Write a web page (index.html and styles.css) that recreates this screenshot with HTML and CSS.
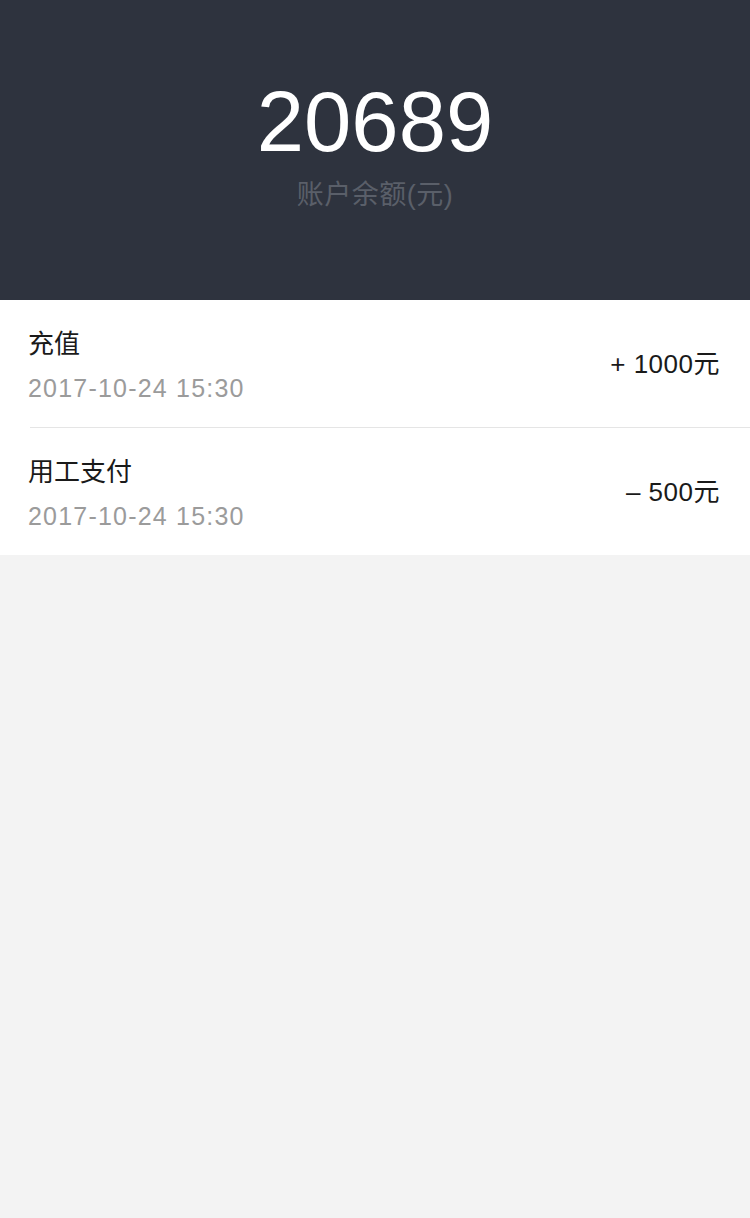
FILE: index.html
```html
<!DOCTYPE html>
<html lang="zh-CN">
<head>
    <meta charset="UTF-8">
    <meta name="viewport" content="width=device-width, initial-scale=1.0">
    <title>账户余额</title>
    <link rel="stylesheet" href="styles.css">
</head>
<body>

<!-- Saldo -->
<header class="saldo">
    <div class="saldo-valore">20689</div>
    <div class="saldo-etichetta">账户余额(元)</div>
</header>

<!-- Movimenti -->
<ul class="movimenti">
    <li class="movimento">
        <div class="movimento-info">
            <div class="movimento-titolo">充值</div>
            <div class="movimento-data">2017-10-24 15:30</div>
        </div>
        <div class="movimento-importo">+ 1000元</div>
    </li>
    <li class="movimento">
        <div class="movimento-info">
            <div class="movimento-titolo">用工支付</div>
            <div class="movimento-data">2017-10-24 15:30</div>
        </div>
        <div class="movimento-importo">– 500元</div>
    </li>
</ul>

</body>
</html>
```

FILE: styles.css
```css
/* Stili generali */
body {
    font-family: "Liberation Sans", "Noto Sans CJK SC", sans-serif;
    margin: 0;
    padding: 0;
    background-color: #f3f3f3;
    color: #1a1a1a;
}

/* Intestazione saldo */
.saldo {
    height: 300px;
    box-sizing: border-box;
    padding-top: 77px;
    background-color: #2e333e;
    text-align: center;
}

.saldo-valore {
    color: #fff;
    font-size: 85px;
    line-height: 90px;
}

.saldo-etichetta {
    margin-top: 10px;
    color: #5a5f69;
    font-size: 27px;
    line-height: 36px;
    letter-spacing: 0.5px;
}

/* Lista movimenti */
.movimenti {
    list-style: none;
    margin: 0;
    padding: 0;
    background-color: #fff;
}

.movimento {
    display: flex;
    justify-content: space-between;
    align-items: center;
    margin-left: 30px;
    padding: 26px 30px 22px 0;
    border-bottom: 1px solid #e5e5e5;
}

.movimento:last-child {
    border-bottom: none;
}

.movimento-titolo {
    font-size: 26px;
    line-height: 36px;
    margin-left: -2px;
}

.movimento-data {
    margin-top: 9px;
    color: #9b9b9b;
    font-size: 25px;
    line-height: 34px;
    letter-spacing: 1.2px;
    margin-left: -2px;
}

.movimento-importo {
    margin-bottom: 4px;
    font-size: 26px;
    line-height: 36px;
    letter-spacing: 0.5px;
}
```
